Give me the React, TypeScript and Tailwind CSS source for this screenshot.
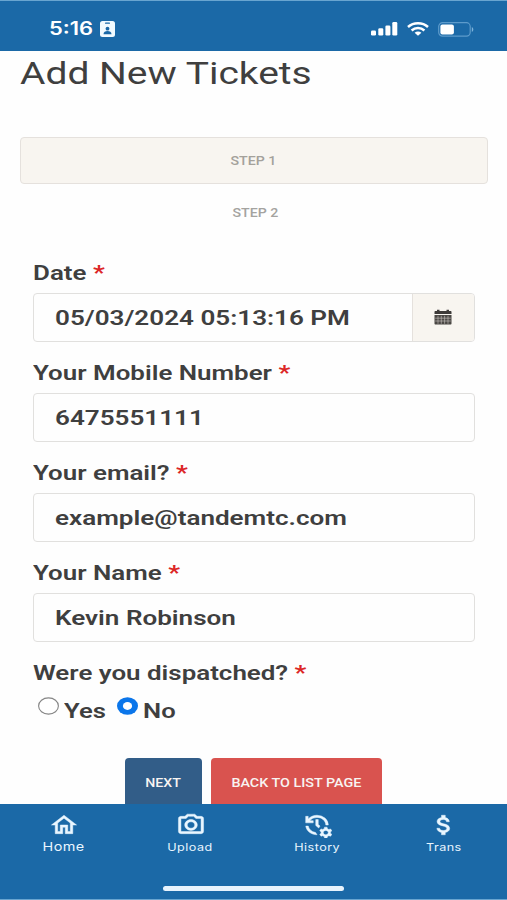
import { useState } from "react";
import type { ReactNode } from "react";
import {
  MdAttachMoney,
  MdOutlineCameraAlt,
  MdOutlineHome,
  MdOutlineManageHistory,
} from "react-icons/md";

interface Field {
  id: string;
  label: string;
  value: string;
  hasPicker?: boolean;
}

const fields: Field[] = [
  { id: "date", label: "Date", value: "05/03/2024 05:13:16 PM", hasPicker: true },
  { id: "mobile", label: "Your Mobile Number", value: "6475551111" },
  { id: "email", label: "Your email?", value: "example@tandemtc.com" },
  { id: "name", label: "Your Name", value: "Kevin Robinson" },
];

const tabs = [
  { label: "Home", Icon: MdOutlineHome, textClass: "text-[12px] leading-[17px]" },
  { label: "Upload", Icon: MdOutlineCameraAlt, textClass: "text-[10.5px] leading-5" },
  { label: "History", Icon: MdOutlineManageHistory, textClass: "text-[10.5px] leading-5" },
  { label: "Trans", Icon: MdAttachMoney, textClass: "text-[10.5px] leading-5" },
];

function StatusBar() {
  return (
    <header className="flex h-[51px] shrink-0 items-center justify-between border-t border-[#69a5d0] bg-[#1b69a7] pt-[6px] pr-[33px] pl-[49px] text-white">
      <div className="flex items-center gap-[6px]">
        <span className="w-[45px] font-['Inter'] text-[18px] leading-6 font-semibold">
          <span className="inline-block origin-left scale-x-[1.22]">5:16</span>
        </span>
        <svg className="h-4 w-[15px]" viewBox="0 0 15 16">
          <rect width="15" height="16" rx="2.5" fill="#f2fbff" />
          <rect x="5" y="1.5" width="5" height="1.3" rx=".6" fill="#1b69a7" />
          <circle cx="7.5" cy="7.7" r="1.9" fill="#1b69a7" />
          <path d="M3.5 13.3c0-2.3 1.8-3.2 4-3.2s4 .9 4 3.2z" fill="#1b69a7" />
        </svg>
      </div>
      <div className="flex items-center gap-[9px]">
        <svg className="h-[14px] w-[27px]" viewBox="0 0 27 14" fill="#fff">
          <rect x="0" y="8.5" width="5" height="5" rx="1.3" />
          <rect x="7.3" y="6.3" width="5" height="7.2" rx="1.3" />
          <rect x="14.4" y="3.5" width="5" height="10" rx="1.3" />
          <rect x="21.3" y="0" width="5" height="13.5" rx="1.3" />
        </svg>
        <svg className="h-[14px] w-[22px]" viewBox="0 0 22 14" fill="none" stroke="#fff" strokeWidth="2.5">
          <path d="M1 5C6.5 0 15.5 0 21 5" />
          <path d="M4.6 8.5c3.6-3.3 9.2-3.3 12.8 0" />
          <path d="M7.6 10.7c2-1.7 4.8-1.7 6.8 0L11 13.7z" fill="#fff" stroke="none" />
        </svg>
        <svg className="h-[15px] w-9" viewBox="0 0 36 15">
          <rect x=".7" y=".7" width="31.5" height="13.4" rx="3.8" fill="none" stroke="#5d9bcb" strokeWidth="1.2" />
          <rect x="2.4" y="2.4" width="13.5" height="10" rx="2" fill="#fff" />
          <path d="M33.8 5v5c2-.8 2-4.2 0-5z" fill="#7db2d9" />
        </svg>
      </div>
    </header>
  );
}

function Label({ children }: { children: ReactNode }) {
  return (
    <div className="h-6 text-[21px] leading-6 font-semibold whitespace-nowrap">
      <span className="inline-block origin-left scale-x-[1.234]">
        {children} <span className="font-bold text-[#dc2626]">*</span>
      </span>
    </div>
  );
}

function CalendarIcon() {
  return (
    <svg className="mr-[2px] mb-[2px] h-4 w-[18px]" viewBox="0 0 18 16">
      <path d="M1.5 2H3V.8h2.5V2h7V.8H15V2h1.5c.6 0 1 .4 1 1v2H.5V3c0-.6.4-1 1-1z" fill="#3d3a38" />
      <path d="M.5 6h17v8.5c0 .6-.4 1-1 1h-15c-.6 0-1-.4-1-1z" fill="#4b4845" />
      <path d="M4 6.8v8M7.3 6.8v8M10.600 6.8v8M14 6.8v8M1.2 9.2h15.6M1.2 12h15.6" stroke="#c9c5c0" strokeWidth=".6" />
    </svg>
  );
}

function Radio({ checked }: { checked: boolean }) {
  return checked ? (
    <svg className="h-[18px] w-[21px]" viewBox="0 0 21 18">
      <ellipse cx="10.5" cy="9" rx="10.5" ry="8.8" fill="#0b76ea" />
      <ellipse cx="10.5" cy="9" rx="4.6" ry="3.9" fill="#fff" />
    </svg>
  ) : (
    <svg className="h-[18px] w-[21px]" viewBox="0 0 21 18">
      <ellipse cx="10.5" cy="9" rx="9.9" ry="8.1" fill="#fff" stroke="#858585" strokeWidth="1.1" />
    </svg>
  );
}

export default function App() {
  const [dispatched, setDispatched] = useState("No");

  return (
    <div className="flex h-[900px] w-[507px] flex-col overflow-hidden bg-[#fefefe] font-['Roboto',sans-serif] text-[#3f3f3f]">
      <StatusBar />

      <main className="flex min-h-0 flex-1 flex-col overflow-hidden">
        <h1 className="h-11 shrink-0 pl-5 text-[31px] leading-[46px] font-normal whitespace-nowrap">
          <span className="inline-block origin-left scale-x-[1.257]">Add New Tickets</span>
        </h1>

        <div className="mx-5 mt-[42px] flex h-[47px] w-[468px] shrink-0 items-center justify-center rounded border-[1.5px] border-[#e5e1dd] bg-[#f8f5f0] text-xs font-medium text-[#a4a19b]">
          <span className="mr-px scale-x-[1.18]">STEP 1</span>
        </div>
        <div className="mt-5 ml-[3px] text-center text-xs leading-[18px] font-medium text-[#a4a3a0]">
          <span className="inline-block scale-x-[1.18]">STEP 2</span>
        </div>

        <form className="mt-[39px] ml-[33px] w-[442px] shrink-0">
          {fields.map((field) => (
            <div key={field.id} className="h-[100px]">
              <Label>{field.label}</Label>
              <div className="mt-2 flex h-[49px] overflow-hidden rounded border-[1.5px] border-[#e1e0de]">
                <div className="flex flex-1 items-center pt-[2px] pl-[21px] text-[20.5px] font-semibold whitespace-nowrap">
                  <span className="origin-left scale-x-[1.271]">{field.value}</span>
                </div>
                {field.hasPicker && (
                  <div className="flex w-[62px] items-center justify-center border-l-[1.5px] border-[#e5e1dd] bg-[#f8f5f0]">
                    <CalendarIcon />
                  </div>
                )}
              </div>
            </div>
          ))}

          <Label>Were you dispatched?</Label>
          <div className="mt-[7px] flex h-[30px] pl-[5px] text-[21px] leading-8 font-semibold">
            {["Yes", "No"].map((option) => (
              <button
                key={option}
                type="button"
                role="radio"
                aria-checked={dispatched === option}
                onClick={() => setDispatched(option)}
                className="flex w-[79px] items-start gap-[5px]"
              >
                <span className="pt-[5px]">
                  <Radio checked={dispatched === option} />
                </span>
                <span className="origin-left scale-x-[1.22] pt-[3px]">{option}</span>
              </button>
            ))}
          </div>
        </form>

        <div className="mt-9 flex shrink-0 gap-[9px] pl-[125px] text-xs font-medium text-[#f8f4f2]">
          <button type="button" className="h-[49px] w-[77px] rounded bg-[#325d88]">
            <span className="inline-block scale-x-[1.18]">NEXT</span>
          </button>
          <button type="button" className="h-[49px] w-[171px] rounded bg-[#d9534f] whitespace-nowrap">
            <span className="inline-block scale-x-[1.195]">BACK TO LIST PAGE</span>
          </button>
        </div>
      </main>

      <nav className="flex h-[96px] shrink-0 flex-col items-center border-b border-[#69a5d0] bg-[#1b69a7] text-[#e9f6ff]">
        <div className="grid w-full grid-cols-4 pt-2">
          {tabs.map(({ label, Icon, textClass }) => (
            <div key={label} className="flex flex-col items-center">
              <Icon className="ml-px size-[26px] scale-x-[1.16] stroke-current stroke-[0.4] [&>path[fill=none]]:stroke-none" />
              <span className={`scale-x-[1.2] font-['Inter'] tracking-[0.4px] ${textClass}`}>{label}</span>
            </div>
          ))}
        </div>
        <div className="mt-auto mb-[8px] h-[5px] w-[181px] rounded-full bg-[#e7f3fd]" />
      </nav>
    </div>
  );
}
